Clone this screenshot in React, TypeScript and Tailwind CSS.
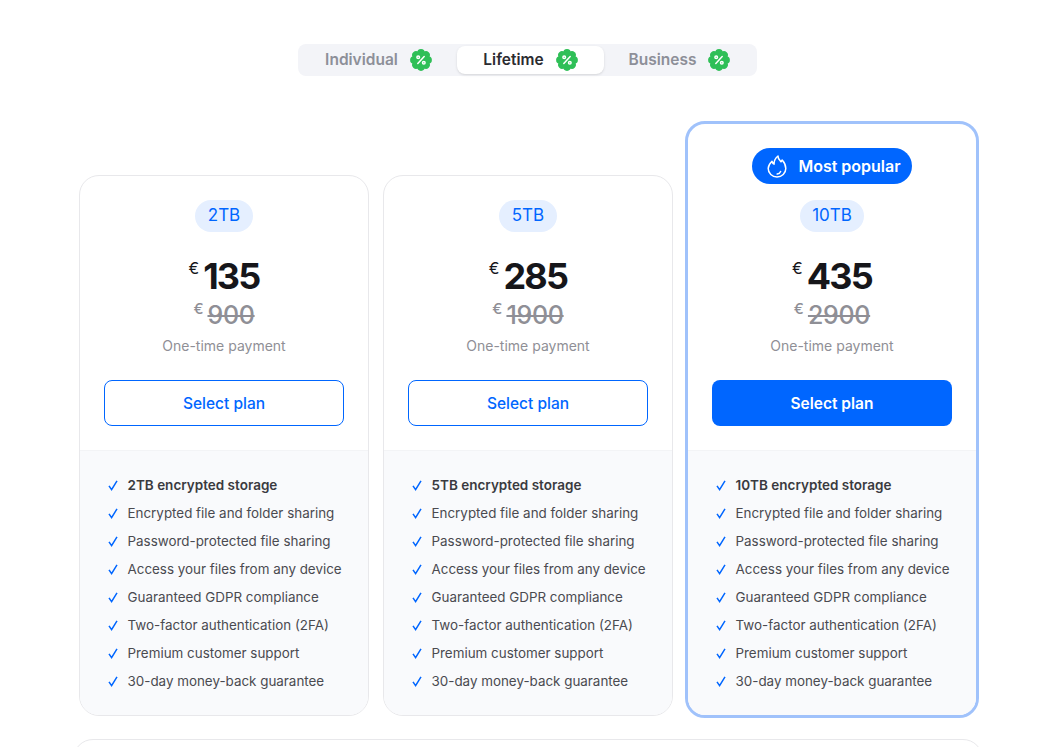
import React from 'react';

const features = [
  'Encrypted file and folder sharing',
  'Password-protected file sharing',
  'Access your files from any device',
  'Guaranteed GDPR compliance',
  'Two-factor authentication (2FA)',
  'Premium customer support',
  '30-day money-back guarantee',
];

const plans = [
  { size: '2TB', price: '135', old: '900' },
  { size: '5TB', price: '285', old: '1900' },
  { size: '10TB', price: '435', old: '2900', popular: true },
];

const lobes = [0, 45, 90, 135, 180, 225, 270, 315];

const PercentBadge = () => (
  <svg width="22" height="22" viewBox="0 0 22 22" className="shrink-0">
    <g fill="#2fbf57">
      <circle cx="11" cy="11" r="9" />
      {lobes.map((a) => (
        <circle key={a} cx="11" cy="3.9" r="3.8" transform={`rotate(${a} 11 11)`} />
      ))}
    </g>
    <g stroke="#fff" fill="none" strokeWidth="1.5">
      <path d="M14.2 7.6 7.8 14.4" strokeLinecap="round" />
      <circle cx="8.2" cy="8.2" r="1.3" />
      <circle cx="13.8" cy="13.8" r="1.3" />
    </g>
  </svg>
);

const Flame = () => (
  <svg width="20" height="23" viewBox="0 0 20 23" fill="none" stroke="#fff" strokeWidth="1.5" strokeLinejoin="round" strokeLinecap="round">
    <path d="M11 1C11 4.5 13 5.2 14 6.8L15.2 5C17.4 7.4 18.8 10.4 18.8 13.6a8.8 8.4 0 0 1-17.6 0C1.2 11 2.6 8.6 5 6.2c.4 1.5 1 2.4 2.1 3C6.9 6 8.4 3 11 1Z" />
    <path d="M13.6 16.4c-.5 1.4-1.8 2.3-3.4 2.6" />
  </svg>
);

const Check = () => (
  <svg width="10" height="11" viewBox="0 0 10 11" fill="none" stroke="#0066ff" strokeWidth="1.5" className="shrink-0">
    <path d="M1 5.8 3.6 9.6 9 .8" />
  </svg>
);

const Tab = ({ label, active, w }: { label: string; active?: boolean; w: string }) => (
  <div className={`${w} h-[28px] flex items-center justify-center gap-[12px] rounded-lg text-[15.5px] font-semibold ${active ? 'bg-white text-[#2b2b30] shadow-sm' : 'text-[#8d8f98]'}`}>
    <span>{label}</span>
    <PercentBadge />
  </div>
);

const Card = ({ size, price, old, popular }: { size: string; price: string; old: string; popular?: boolean }) => (
  <div className={`flex flex-col bg-white overflow-hidden rounded-[20px] ${popular ? 'w-[294px] h-[597px] -ml-[2px] -mb-[2px] border-[3px] border-[#a0c2fb]' : 'w-[290px] h-[541px] border border-[#e8e8eb]'}`}>
    <div className="flex flex-col items-center pt-[24px] flex-1">
      {popular && (
        <div className="w-[160px] h-[36px] mb-[16px] pl-[4px] rounded-full bg-[#0066ff] text-white flex items-center justify-center gap-[11px] text-[16px] font-semibold">
          <Flame />
          <span>Most popular</span>
        </div>
      )}
      <div className="h-[32px] px-[12.5px] rounded-full bg-[#e5efff] text-[#0066ff] text-[17px] flex items-center">{size}</div>
      <div className="mt-[23px] h-[42px] flex items-center justify-center text-[#16161a]">
        <span className="text-[16px] leading-none self-start mt-[5px] mr-[4px]">€</span>
        <span className="text-[36px] font-bold leading-none tracking-[-1.8px]">{price}</span>
      </div>
      <div className="mt-[2px] h-[32px] flex items-center justify-center text-[#8f8f96]">
        <span className="text-[15px] leading-none self-start mt-[2px] mr-[4px] font-medium">€</span>
        <span className="text-[25px] font-medium leading-none tracking-[-0.3px] line-through">{old}</span>
      </div>
      <div className="mt-[5px] text-[14px] leading-[20px] text-[#8f8f96]">One-time payment</div>
      <div className={`mt-[24px] w-[240px] h-[46px] pt-[1px] rounded-lg flex items-center justify-center text-[15.5px] ${popular ? 'bg-[#0066ff] text-white font-semibold' : 'border border-[#0066ff] text-[#0066ff] font-medium'}`}>
        Select plan
      </div>
    </div>
    <div className="bg-[#f9fafc] border-t border-[#f3f4f6] pt-[24px] h-[265px] pl-[27.5px]">
      <div className="flex flex-col gap-[8px]">
        <div className="h-[20px] flex items-center gap-[10px] text-[13.5px] font-semibold text-[#3a3a40]">
          <Check />
          <span>{size} encrypted storage</span>
        </div>
        {features.map((f) => (
          <div key={f} className="h-[20px] flex items-center gap-[10px] text-[13.4px] text-[#4a4a50]">
            <Check />
            <span>{f}</span>
          </div>
        ))}
      </div>
    </div>
  </div>
);

export default function App() {
  return (
    <div className="h-screen overflow-hidden bg-white font-['Inter',sans-serif]">
      <div className="pt-[44px] flex justify-center">
        <div className="w-[459px] h-[32px] ml-[6px] p-[2px] rounded-lg bg-[#f3f4f8] flex items-center">
          <Tab label="Individual" w="w-[157px]" />
          <Tab label="Lifetime" w="w-[147px]" active />
          <Tab label="Business" w="w-[151px]" />
        </div>
      </div>
      <div className="mt-[45px] pl-[79px] flex items-end gap-[14px]">
        {plans.map((p) => (
          <Card key={p.size} {...p} />
        ))}
      </div>
      <div className="mt-[23px] ml-[73px] w-[910px] h-[60px] rounded-[20px] border border-[#e8e8eb]" />
    </div>
  );
}
